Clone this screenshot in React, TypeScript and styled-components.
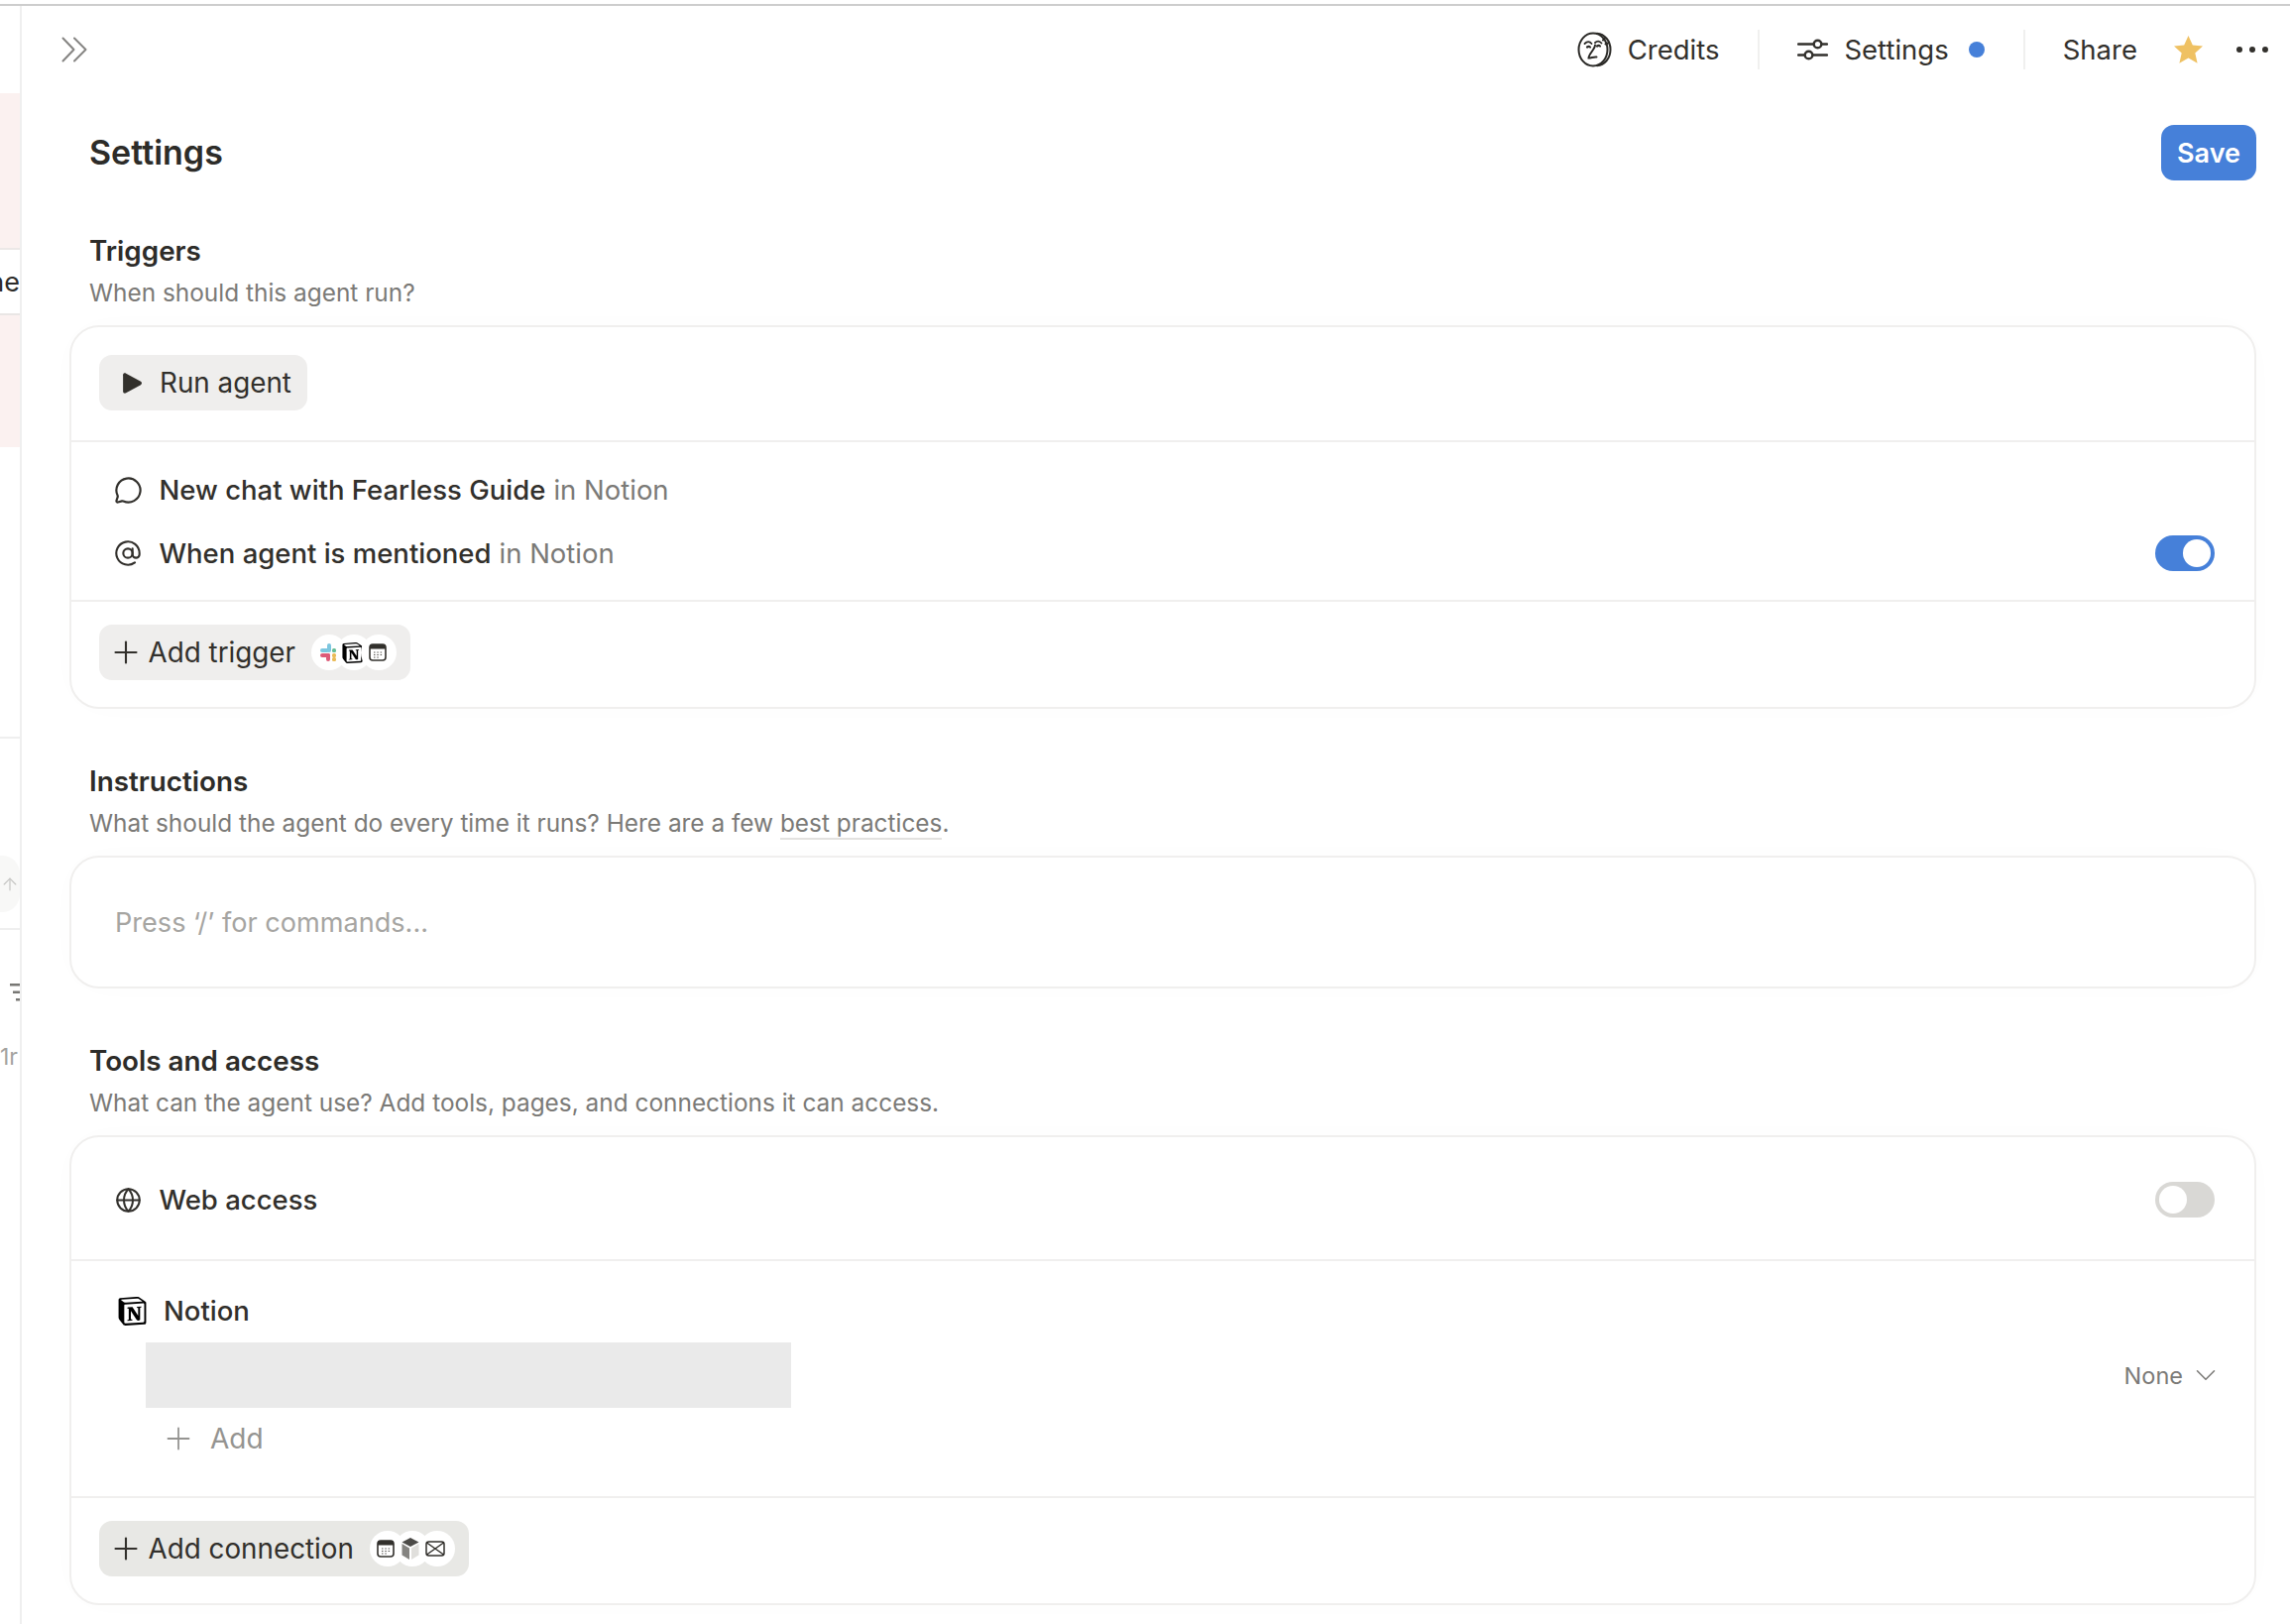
import React from "react";
import styled, { createGlobalStyle } from "styled-components";
import { ArrowUp, AtSign, ChevronDown, Globe, MessageCircle, Plus } from "lucide-react";
import { SiNotion } from "react-icons/si";

const ink = "#32302c";
const muted = "#7b7a77";
const line = "#f0efee";
const blue = "#4680d9";

const GlobalStyle = createGlobalStyle`
	html, body {
		margin: 0;
		padding: 0;
		background: #fff;
	}
	* {
		box-sizing: border-box;
	}
`;

const Page = styled.div`
	width: 2310px;
	height: 1638px;
	overflow: hidden;
	padding-top: 4px;
	display: flex;
	flex-direction: column;
	background: #fff;
	color: ${ink};
	font-family: Inter, "Noto Sans", sans-serif;
`;

const TopRule = styled.div`
	height: 2px;
	flex: none;
	background: #cdcdcd;
`;

const Body = styled.div`
	flex: 1;
	display: flex;
	min-height: 0;
`;

const Sidebar = styled.aside`
	width: 22px;
	flex: none;
	display: flex;
	flex-direction: column;
	border-right: 2px solid #efefef;
	overflow: hidden;
`;

const PinkBlock = styled.div<{ $height: number; $top?: number }>`
	height: ${({ $height }) => $height}px;
	margin-top: ${({ $top }) => $top ?? 0}px;
	flex: none;
	background: #fbf1f0;
`;

const SideRow = styled.div`
	height: 68px;
	flex: none;
	display: flex;
	align-items: center;
	justify-content: flex-end;
	overflow: hidden;
	white-space: nowrap;
	background: #fff;
	border-top: 2px solid #ece8e7;
	border-bottom: 2px solid #e9e6e5;
	font-size: 27px;
	color: #2c2b29;
`;

const SideRule = styled.div<{ $top: number }>`
	height: 2px;
	flex: none;
	margin-top: ${({ $top }) => $top}px;
	background: #efefef;
`;

const SideRound = styled.div`
	height: 57px;
	margin-top: 118px;
	flex: none;
	display: flex;
	align-items: center;
	justify-content: center;
	overflow: hidden;
	background: #f8f8f7;
	border-radius: 0 18px 18px 0;
	color: #c4c4c2;
`;

const SideFilter = styled.svg`
	display: block;
	flex: none;
	margin: 54px 0 0 10px;
`;

const SideCount = styled.div`
	flex: none;
	margin-top: 42px;
	font-size: 23px;
	line-height: 28px;
	white-space: nowrap;
	color: #a3a29f;
`;

const Main = styled.main`
	flex: 1;
	min-width: 0;
	display: flex;
	flex-direction: column;
`;

const TopBar = styled.header`
	height: 88px;
	flex: none;
	display: flex;
	align-items: center;
	padding: 0 21px 0 40px;
`;

const TopActions = styled.div`
	margin-left: auto;
	display: flex;
	align-items: center;
	color: ${ink};
`;

const TopItem = styled.div`
	display: flex;
	align-items: center;
	gap: 16px;
	font-size: 27.5px;
	line-height: 36px;
`;

const TopDivider = styled.div`
	width: 2px;
	height: 40px;
	margin: 0 38px 0 39px;
	background: #f0f0ef;
`;

const UnsavedDot = styled.span`
	width: 16px;
	height: 16px;
	margin-left: 4px;
	border-radius: 50%;
	background: ${blue};
`;

const StarIcon = styled.svg`
	display: block;
	margin: 0 32px 0 36px;
`;

const Content = styled.div`
	padding: 32px 34px 0 48px;
	display: flex;
	flex-direction: column;
`;

const HeaderRow = styled.div`
	height: 56px;
	display: flex;
	align-items: center;
	justify-content: space-between;
	padding-left: 20px;
`;

const PageTitle = styled.h1`
	margin: 0;
	font-size: 34px;
	line-height: 44px;
	font-weight: 600;
	color: #2d2c29;
`;

const SaveButton = styled.button`
	width: 96px;
	height: 56px;
	padding: 0;
	border: 0;
	border-radius: 13px;
	background: ${blue};
	color: #fff;
	font: 600 27px Inter, sans-serif;
`;

const SectionHead = styled.div<{ $top: number }>`
	margin-top: ${({ $top }) => $top}px;
	padding-left: 20px;
`;

const SectionTitle = styled.h2`
	margin: 0;
	font-size: 27.8px;
	line-height: 36px;
	font-weight: 600;
	color: #2d2c29;
`;

const SectionHint = styled.p`
	margin: 7px 0 16px;
	font-size: 24.4px;
	line-height: 34px;
	color: ${muted};
`;

const HintLink = styled.span`
	border-bottom: 2px solid #e3e2e0;
`;

const Card = styled.section`
	border: 2px solid ${line};
	border-radius: 30px;
	background: #fff;
	box-shadow: 0 0 40px rgba(0, 0, 0, 0.012);
`;

const CardPart = styled.div<{ $pad: string; $divided?: boolean }>`
	padding: ${({ $pad }) => $pad};
	border-top: ${({ $divided }) => ($divided ? `2px solid ${line}` : "0")};
`;

const PillButton = styled.button<{ $tone?: string }>`
	height: 56px;
	display: inline-flex;
	align-items: center;
	padding: 0 16px;
	border: 0;
	border-radius: 13px;
	background: ${({ $tone }) => $tone ?? "#efeeed"};
	color: ${ink};
	font: 400 27.8px Inter, sans-serif;
	white-space: nowrap;
`;

const PlayIcon = styled.svg`
	display: block;
	margin: 0 17px 0 7px;
`;

const PlusGlyph = styled(Plus)`
	flex: none;
	margin: 0 5px 0 -7.5px;
`;

const LogoStack = styled.span`
	display: inline-flex;
	margin: 0 -2px 0 16px;
`;

const LogoChip = styled.span`
	width: 36px;
	height: 36px;
	display: flex;
	align-items: center;
	justify-content: center;
	padding-right: 3px;
	border-radius: 50%;
	background: #fff;
	& + & {
		margin-left: -11px;
	}
`;

const TriggerRow = styled.div`
	height: 64px;
	display: flex;
	align-items: center;
	font-size: 27.5px;
`;

const RowIcon = styled.span`
	width: 32px;
	display: flex;
	justify-content: center;
	margin-right: 15.5px;
	flex: none;
`;

const RowText = styled.span`
	font-weight: 450;
`;

const RowMuted = styled.span`
	margin-left: 8px;
	color: ${muted};
`;

const Toggle = styled.span<{ $on?: boolean }>`
	width: 60px;
	height: 36px;
	margin-left: auto;
	flex: none;
	display: flex;
	align-items: center;
	justify-content: ${({ $on }) => ($on ? "flex-end" : "flex-start")};
	padding: 0 4px;
	border-radius: 18px;
	background: ${({ $on }) => ($on ? blue : "#d9d8d5")};

	&::after {
		content: "";
		width: 28px;
		height: 28px;
		border-radius: 50%;
		background: #fff;
	}
`;

const Placeholder = styled.div`
	height: 130px;
	display: flex;
	align-items: center;
	padding-left: 44px;
	font-size: 27.1px;
	color: #a6a5a2;
`;

const NotionHead = styled.div`
	display: flex;
	align-items: center;
	height: 28px;
	gap: 17px;
	font-size: 27.5px;
`;

const AccessRow = styled.div`
	display: flex;
	align-items: center;
	justify-content: space-between;
	margin-top: 18px;
	padding-left: 28px;
`;

const RedactedBlock = styled.div`
	width: 651px;
	height: 66px;
	background: #eaeaea;
`;

const AccessSelect = styled.span`
	display: flex;
	align-items: center;
	gap: 6px;
	margin-right: -8px;
	font-size: 23.5px;
	color: ${muted};
`;

const AddRow = styled.div`
	display: flex;
	align-items: center;
	gap: 14px;
	height: 32px;
	margin: 15px 0 0 43px;
	font-size: 28px;
	color: #959491;
`;

const CollapseIcon = () => (
	<svg width="26" height="26" viewBox="0 0 26 26" fill="none" stroke="#858482" strokeWidth="2" strokeLinecap="round" strokeLinejoin="round">
		<path d="M1.500 1.500L12.500 13 1.500 24.500M13 1.500L24.500 13 13 24.500" />
	</svg>
);

const CoinIcon = () => (
	<svg width="35" height="36" viewBox="0 0 35 36" fill="none" stroke="#2b2a27" strokeWidth="2" strokeLinecap="round">
		<ellipse cx="16" cy="18" rx="14.500" ry="16.500" />
		<path d="M20 1.800c7.500.6 13.500 7.200 13.500 16.200S27.500 33.600 20 34.200" />
		<path d="M28 6.500l-2 2M31 11.500l-2.500 1" />
		<path d="M7.500 12c2.500-2.500 5-2.500 7 0M18 11c2-2 4.500-2 6.500.5" strokeWidth="1.800" />
		<path d="M10 15.500c1.200-.8 2-.8 3 0M20 14.500c1.200-.8 2-.8 3 0" strokeWidth="2.200" />
		<path d="M18 13.500c0 4-6.500 9-6.500 13 2.500 0 5.500-1.500 8-1" />
	</svg>
);

const SlidersIcon = () => (
	<svg width="31" height="24" viewBox="0 0 31 24" fill="none" stroke="#32302c" strokeWidth="2.400" strokeLinecap="round">
		<path d="M1 6.500h15M25 6.500h5M1 17.500h6M16 17.500h14" />
		<circle cx="20.500" cy="6.500" r="3.800" />
		<circle cx="11.500" cy="17.500" r="3.800" />
	</svg>
);

const DotsIcon = () => (
	<svg width="34" height="8" viewBox="0 0 34 8" fill="#32302c">
		<circle cx="4" cy="4" r="3" />
		<circle cx="17" cy="4" r="3" />
		<circle cx="30" cy="4" r="3" />
	</svg>
);

const SlackLogo = () => (
	<svg width="18" height="20" viewBox="0 0 18 20">
		<rect x="8" y="1" width="4" height="9" rx="2" fill="#7cc6df" />
		<rect x="1" y="6" width="9" height="4" rx="2" fill="#7cc6df" />
		<rect x="1" y="11" width="10" height="4" rx="2" fill="#dd5a78" />
		<rect x="7" y="11" width="4" height="8" rx="2" fill="#dd5a78" />
		<rect x="13" y="6" width="4" height="4" rx="1.500" fill="#65bd96" />
		<rect x="13" y="11" width="4" height="4" rx="1.500" fill="#eabb57" />
		<rect x="13" y="15" width="4" height="4" rx="1.500" fill="#eabb57" />
	</svg>
);

const CalendarLogo = () => (
	<svg width="18" height="18" viewBox="0 0 18 18">
		<rect x="1" y="1" width="16" height="16" rx="3" fill="#fff" stroke="#32302c" strokeWidth="1.600" />
		<path d="M1 5.500V4a3 3 0 0 1 3-3h10a3 3 0 0 1 3 3v1.500z" fill="#32302c" />
		<path d="M5 9h1.500M8.300 9h1.500M11.600 9h1.500M5 11.500h1.500M8.300 11.500h1.500M11.600 11.500h1.500M5 14h1.500M8.300 14h1.500" stroke="#55534f" strokeWidth="1.200" />
	</svg>
);

const CubeLogo = () => (
	<svg width="20" height="24" viewBox="0 0 20 24">
		<path d="M10 1l8.500 4.500L10 10 1.500 5.500z" fill="#4c4b48" />
		<path d="M1.500 7L9 11.500V23l-7.500-4.500z" fill="#858481" />
		<path d="M18.500 7L11 11.500V23l7.500-4.500z" fill="#e0dfdc" />
	</svg>
);

const MailLogo = () => (
	<svg width="20" height="16" viewBox="0 0 20 16" fill="none" stroke="#32302c" strokeWidth="1.500">
		<rect x="1" y="1" width="18" height="14" rx="2.500" />
		<path d="M1.500 2l17 12M18.500 2l-17 12" />
	</svg>
);

const App: React.FC = () => (
	<Page>
		<GlobalStyle />
		<TopRule />
		<Body>
			<Sidebar>
				<PinkBlock $height={156} $top={88} />
				<SideRow>ne</SideRow>
				<PinkBlock $height={133} />
				<SideRule $top={292} />
				<SideRound>
					<ArrowUp size={42} strokeWidth={1.4} />
				</SideRound>
				<SideRule $top={16} />
				<SideFilter width="10" height="18" viewBox="0 0 10 18" fill="#787774">
					<rect x="0" y="0" width="10" height="2.500" />
					<rect x="3" y="7.500" width="7" height="2.500" />
					<rect x="6" y="15" width="4" height="2.500" />
				</SideFilter>
				<SideCount>1r</SideCount>
			</Sidebar>
			<Main>
				<TopBar>
					<CollapseIcon />
					<TopActions>
						<TopItem>
							<CoinIcon />
							Credits
						</TopItem>
						<TopDivider />
						<TopItem>
							<SlidersIcon />
							Settings
							<UnsavedDot />
						</TopItem>
						<TopDivider />
						<TopItem>Share</TopItem>
						<StarIcon width="31" height="30" viewBox="0 0 31 30" fill="#efc163">
							<path d="M15.500 1l4.300 9.600 10.200 1-7.700 6.900 2.300 10.300-9.100-5.400-9.100 5.400 2.300-10.300L1 11.600l10.200-1z" />
						</StarIcon>
						<DotsIcon />
					</TopActions>
				</TopBar>
				<Content>
					<HeaderRow>
						<PageTitle>Settings</PageTitle>
						<SaveButton>Save</SaveButton>
					</HeaderRow>

					<SectionHead $top={53}>
						<SectionTitle>Triggers</SectionTitle>
						<SectionHint>When should this agent run?</SectionHint>
					</SectionHead>
					<Card>
						<CardPart $pad="28px 27px 30px 28px">
							<PillButton>
								<PlayIcon width="21" height="23" viewBox="0 0 19 20" fill="#32302c">
									<path d="M1 2.500C1 1 2.500.4 3.800 1.100l13.400 7.400c1.200.7 1.200 2.300 0 3L3.800 18.900C2.500 19.600 1 19 1 17.500z" />
								</PlayIcon>
								Run agent
							</PillButton>
						</CardPart>
						<CardPart $divided $pad="16px 40px 15px 41px">
							<TriggerRow>
								<RowIcon>
									<MessageCircle size={29} strokeWidth={1.8} />
								</RowIcon>
								<RowText>New chat with Fearless Guide</RowText>
								<RowMuted>in Notion</RowMuted>
							</TriggerRow>
							<TriggerRow>
								<RowIcon>
									<AtSign size={28} strokeWidth={1.8} />
								</RowIcon>
								<RowText>When agent is mentioned</RowText>
								<RowMuted>in Notion</RowMuted>
								<Toggle $on />
							</TriggerRow>
						</CardPart>
						<CardPart $divided $pad="23px 27px 27px 28px">
							<PillButton>
								<PlusGlyph size={36} strokeWidth={1.4} />
								Add trigger
								<LogoStack>
									<LogoChip><SlackLogo /></LogoChip>
									<LogoChip><SiNotion size={21} color="#000" /></LogoChip>
									<LogoChip><CalendarLogo /></LogoChip>
								</LogoStack>
							</PillButton>
						</CardPart>
					</Card>

					<SectionHead $top={55}>
						<SectionTitle>Instructions</SectionTitle>
						<SectionHint>
							What should the agent do every time it runs? Here are a few <HintLink>best practices</HintLink>.
						</SectionHint>
					</SectionHead>
					<Card>
						<Placeholder>Press ‘/’ for commands...</Placeholder>
					</Card>

					<SectionHead $top={55}>
						<SectionTitle>Tools and access</SectionTitle>
						<SectionHint>What can the agent use? Add tools, pages, and connections it can access.</SectionHint>
					</SectionHead>
					<Card>
						<CardPart $pad="31px 40px 28px 41px">
							<TriggerRow>
								<RowIcon>
									<Globe size={27} strokeWidth={1.8} />
								</RowIcon>
								<RowText>Web access</RowText>
								<Toggle />
							</TriggerRow>
						</CardPart>
						<CardPart $divided $pad="36px 40px 42px 47px">
							<NotionHead>
								<SiNotion size={29} color="#000" />
								<RowText>Notion</RowText>
							</NotionHead>
							<AccessRow>
								<RedactedBlock />
								<AccessSelect>
									None
									<ChevronDown size={34} strokeWidth={1.1} />
								</AccessSelect>
							</AccessRow>
							<AddRow>
								<Plus size={36} strokeWidth={1.2} />
								Add
							</AddRow>
						</CardPart>
						<CardPart $divided $pad="23px 27px 27px 28px">
							<PillButton $tone="#e8e8e5">
								<PlusGlyph size={36} strokeWidth={1.4} />
								Add connection
								<LogoStack>
									<LogoChip><CalendarLogo /></LogoChip>
									<LogoChip><CubeLogo /></LogoChip>
									<LogoChip><MailLogo /></LogoChip>
								</LogoStack>
							</PillButton>
						</CardPart>
					</Card>
				</Content>
			</Main>
		</Body>
	</Page>
);

export default App;
